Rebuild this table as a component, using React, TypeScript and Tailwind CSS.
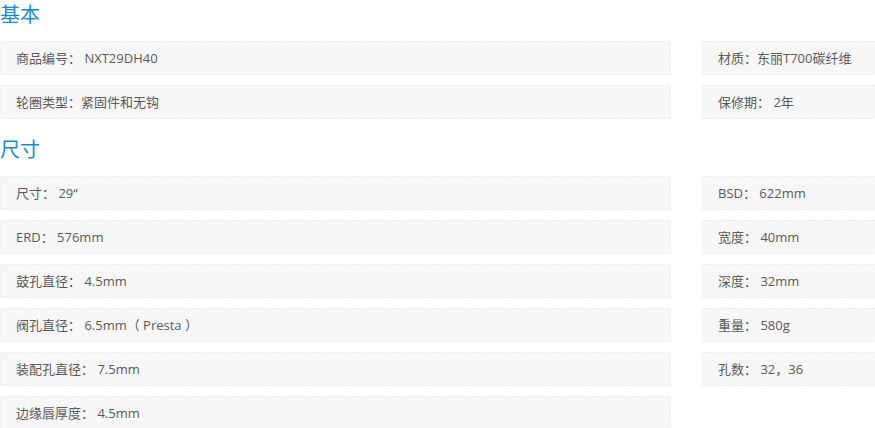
const basic: [string, string][] = [
  ["商品编号： NXT29DH40", "材质：东丽T700碳纤维"],
  ["轮圈类型：紧固件和无钩", "保修期： 2年"],
];

const size: [string, string | null][] = [
  ["尺寸： 29“", "BSD： 622mm"],
  ["ERD： 576mm", "宽度： 40mm"],
  ["鼓孔直径： 4.5mm", "深度： 32mm"],
  ["阀孔直径： 6.5mm（ Presta ）", "重量： 580g"],
  ["装配孔直径： 7.5mm", "孔数： 32，36"],
  ["边缘唇厚度： 4.5mm", null],
];

const boxStyle =
  "h-[34px] mb-[10px] border border-dashed border-[#ececec] bg-[#f7f7f7] rounded-[2px] pl-[15px] text-[13px] leading-[32px] text-[#5a5a5a] whitespace-nowrap";

const Row = ({ left, right }: { left: string; right: string | null }) => (
  <div className="flex gap-[31px]">
    <div className={`w-[671px] shrink-0 ${boxStyle}`}>{left}</div>
    {right ? (
      <div className={`w-[220px] shrink-0 ${boxStyle}`}>{right}</div>
    ) : null}
  </div>
);

export default function App() {
  return (
    <div
      className="w-[875px] h-[428px] overflow-hidden bg-white"
      style={{ fontFamily: "'Open Sans', 'Noto Sans CJK SC', sans-serif" }}
    >
      <div className="w-[940px]">
        {/* 基本 */}
        <h2 className="text-[20px] leading-[30px] text-[#1a8ad4] mb-[11px]">基本</h2>
        {basic.map(([l, r]) => (
          <Row key={l} left={l} right={r} />
        ))}

        {/* 尺寸 */}
        <h2 className="text-[20px] leading-[30px] text-[#1a8ad4] mt-[6px] mb-[11px]">
          尺寸
        </h2>
        {size.map(([l, r]) => (
          <Row key={l} left={l} right={r} />
        ))}
      </div>
    </div>
  );
}
